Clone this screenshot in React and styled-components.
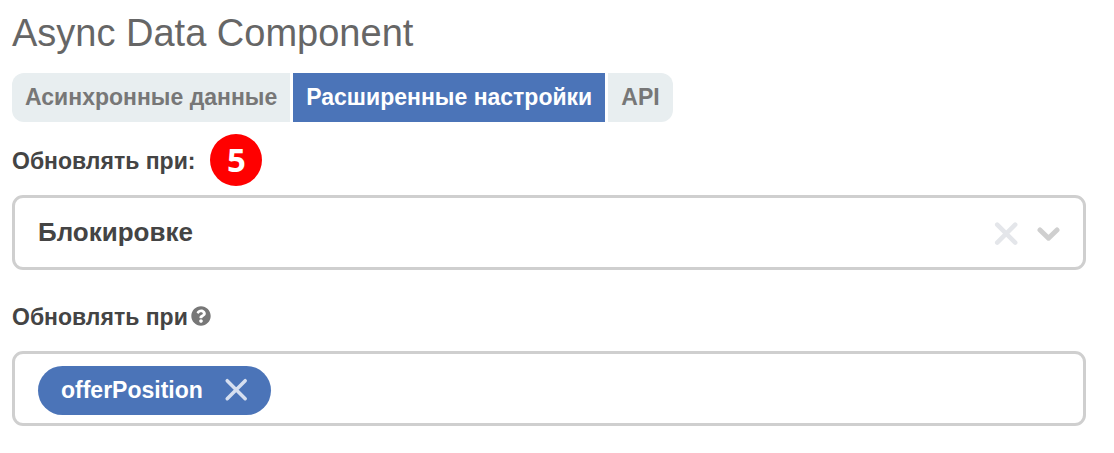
import React, { useState } from 'react';
import styled, { createGlobalStyle } from 'styled-components';
import { FaQuestionCircle } from 'react-icons/fa';

const TABS = ['Асинхронные данные', 'Расширенные настройки', 'API'];
const EVENTS = ['Блокировке', 'Изменении'];

const App = () => {
  const [activeTab, setActiveTab] = useState(1);
  const [event, setEvent] = useState(EVENTS[0]);
  const [fields, setFields] = useState(['offerPosition']);

  return (
    <>
      <GlobalStyle />
      <Page>
        <Title>Async Data Component</Title>
        <TabList role="tablist">
          {TABS.map((tab, index) => (
            <Tab
              key={tab}
              type="button"
              role="tab"
              aria-selected={index === activeTab}
              $active={index === activeTab}
              onClick={() => setActiveTab(index)}
            >
              {tab}
            </Tab>
          ))}
        </TabList>

        <Form>
          <Field>
            <LabelRow $gap={15}>
              <Label htmlFor="refresh-event">Обновлять при:</Label>
              <Badge>5</Badge>
            </LabelRow>
            <Control>
              <Select
                id="refresh-event"
                value={event}
                onChange={(e) => setEvent(e.target.value)}
              >
                <option value="" />
                {EVENTS.map((item) => (
                  <option key={item}>{item}</option>
                ))}
              </Select>
              <IconButton
                type="button"
                aria-label="Очистить"
                $color="#e4e6ea"
                onClick={() => setEvent('')}
              >
                <Cross strokeWidth="4.5" />
              </IconButton>
              <Chevron viewBox="0 0 24 24" aria-hidden="true">
                <path d="M4 8l8.5 8.2L21 8" />
              </Chevron>
            </Control>
          </Field>

          <Field>
            <LabelRow $gap={3}>
              <Label htmlFor="refresh-fields">Обновлять при</Label>
              <HelpIcon aria-hidden="true" />
            </LabelRow>
            <Control>
              {fields.map((field) => (
                <Tag key={field}>
                  {field}
                  <IconButton
                    type="button"
                    aria-label={`Удалить ${field}`}
                    $color="#d6dff0"
                    onClick={() =>
                      setFields((prev) => prev.filter((f) => f !== field))
                    }
                  >
                    <Cross strokeWidth="3.5" />
                  </IconButton>
                </Tag>
              ))}
              <TextInput id="refresh-fields" type="text" />
            </Control>
          </Field>
        </Form>
      </Page>
    </>
  );
};

const Cross = ({ strokeWidth }) => (
  <CrossIcon viewBox="0 0 24 24" strokeWidth={strokeWidth} aria-hidden="true">
    <path d="M3.2 2.7l18 18M21.2 2.7l-18 18" />
  </CrossIcon>
);

const GlobalStyle = createGlobalStyle`
  * {
    box-sizing: border-box;
  }

  body {
    margin: 0;
    background-color: #fff;
    font-family: 'Liberation Sans', Arial, sans-serif;
    color: #444;
  }
`;

const Page = styled.main`
  padding: 11px 28px 24px 12px;
`;

const Title = styled.h1`
  margin: 0 0 18px;
  font-size: 38px;
  line-height: 44px;
  font-weight: 400;
  color: #666;
`;

const TabList = styled.div`
  display: flex;
  gap: 3px;
`;

const Tab = styled.button`
  padding: 11px 13px 12px;
  border: none;
  font-family: inherit;
  font-size: 23px;
  line-height: 26px;
  font-weight: 700;
  cursor: pointer;
  background-color: ${({ $active }) => ($active ? '#4b74b8' : '#e8eef0')};
  color: ${({ $active }) => ($active ? '#fff' : '#777')};

  &:first-child {
    border-radius: 12px 0 0 12px;
  }

  &:last-child {
    border-radius: 0 12px 12px 0;
  }
`;

const Form = styled.form`
  display: flex;
  flex-direction: column;
  gap: 20px;
  padding-top: 12px;
`;

const Field = styled.div`
  display: flex;
  flex-direction: column;
  gap: 9px;
`;

const LabelRow = styled.div`
  display: flex;
  align-items: center;
  gap: ${({ $gap }) => $gap}px;
  min-height: 52px;
`;

const Label = styled.label`
  padding-top: 2px;
  font-size: 23px;
  line-height: 26px;
  font-weight: 700;
`;

const Badge = styled.span`
  display: flex;
  justify-content: center;
  align-items: center;
  width: 52px;
  height: 52px;
  border-radius: 50%;
  background-color: #f00;
  color: #fff;
  font-family: 'Noto Sans', Verdana, sans-serif;
  font-size: 33px;
  line-height: 36px;
  font-weight: 700;
`;

const HelpIcon = styled(FaQuestionCircle)`
  width: 20px;
  height: 20px;
  color: #777;
`;

const Control = styled.div`
  display: flex;
  align-items: center;
  min-height: 75px;
  padding: 3px 23px 0;
  border: 3px solid #cfcfcf;
  border-radius: 11px;
`;

const Select = styled.select`
  flex: 1;
  min-width: 0;
  padding: 0 0 4px;
  border: none;
  outline: none;
  appearance: none;
  background: none;
  font-family: inherit;
  font-size: 26px;
  line-height: 32px;
  font-weight: 700;
  color: #444;
`;

const TextInput = styled.input`
  flex: 1;
  min-width: 0;
  padding: 0 12px;
  border: none;
  outline: none;
  background: none;
  font-family: inherit;
  font-size: 26px;
  line-height: 32px;
  color: #444;
`;

const IconButton = styled.button`
  display: flex;
  padding: 0;
  border: none;
  background: none;
  color: ${({ $color }) => $color};
  cursor: pointer;
`;

const CrossIcon = styled.svg`
  width: 24px;
  height: 24px;
  fill: none;
  stroke: currentColor;
  stroke-linecap: round;
`;

const Chevron = styled.svg`
  width: 24px;
  height: 24px;
  margin-left: 18px;
  fill: none;
  stroke: #cfcfcf;
  stroke-width: 5;
  stroke-linecap: round;
  stroke-linejoin: round;
`;

const Tag = styled.span`
  display: flex;
  align-items: center;
  gap: 21px;
  height: 49px;
  padding: 0 23px;
  border-radius: 25px;
  background-color: #4b74b8;
  color: #fff;
  font-size: 23px;
  line-height: 26px;
  font-weight: 700;
`;

export default App;
